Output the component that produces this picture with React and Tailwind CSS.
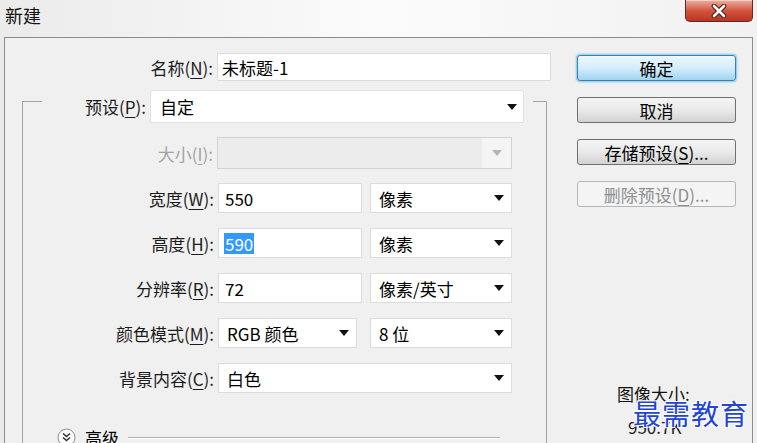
import React from 'react';

const Caret = ({ color = '#111' }) => (
  <svg width="10" height="6" viewBox="0 0 10 6" className="shrink-0">
    <path d="M0 0h10L5 6z" fill={color} />
  </svg>
);

const Label = ({ text, k, className = '' }) => (
  <span className={`shrink-0 text-right text-[17px] leading-none text-[#1c1c1c] ${className}`}>
    {text}(<span className="underline underline-offset-[3px]">{k}</span>):
  </span>
);

const CloseButton = () => (
  <div className="flex h-[22px] w-[68px] items-center justify-center rounded-b-[5px] border border-t-0 border-[#5e2a22] bg-gradient-to-b from-[#eab0a4] via-[#d4563f] to-[#b93320] shadow-[inset_0_1px_0_#f6cfc6]">
    <svg width="16" height="14" viewBox="0 0 16 14">
      <path d="M3 2 L13 12 M13 2 L3 12" stroke="#4a1e17" strokeWidth="4.6" strokeLinecap="round" />
      <path d="M3 2 L13 12 M13 2 L3 12" stroke="#fff" strokeWidth="2.6" strokeLinecap="round" />
    </svg>
  </div>
);

const Button = ({ children, primary, disabled }) => {
  if (primary) {
    return (
      <div className="flex h-[26px] w-[159px] items-center justify-center rounded-[3px] border border-[#3c7fb1] bg-gradient-to-b from-[#eef8fe] via-[#d4edfb] to-[#9fd3f1] text-[17px] leading-none shadow-[0_0_2px_1px_#7cc6ef]">
        {children}
      </div>
    );
  }
  if (disabled) {
    return (
      <div className="flex h-[26px] w-[159px] items-center justify-center rounded-[3px] border border-[#b3b7ba] bg-[#f4f4f4] text-[17px] leading-none text-[#8f8f8f]">
        {children}
      </div>
    );
  }
  return (
    <div className="flex h-[26px] w-[159px] items-center justify-center rounded-[3px] border border-[#707070] bg-gradient-to-b from-[#f4f4f4] via-[#e9e9e9] to-[#d2d2d2] text-[17px] leading-none">
      {children}
    </div>
  );
};

const Field = ({ children, className = '' }) => (
  <div className={`flex h-full items-center border border-[#dcdcdc] bg-white text-[17px] leading-none ${className}`}>
    {children}
  </div>
);

const Select = ({ children, className = '' }) => (
  <div className={`flex h-full items-center justify-between border border-[#dcdcdc] bg-white pl-[8px] pr-[7px] text-[17px] leading-none ${className}`}>
    <span>{children}</span>
    <Caret />
  </div>
);

export default function App() {
  return (
    <div className="relative h-[443px] w-[757px] overflow-hidden bg-gradient-to-r from-[#ebebeb] via-[#fbfbfb] to-[#f1f1f1] font-['Noto_Sans_CJK_SC',sans-serif] text-black">
      {/* title bar */}
      <div className="flex h-[37px] items-start justify-between pr-[4px]">
        <span className="ml-[5px] mt-[3px] text-[18px] leading-[24px] text-[#111]">新建</span>
        <CloseButton />
      </div>

      {/* dialog body */}
      <div className="ml-[4px] flex h-[420px] w-[749px] border border-b-0 border-[#8c8c8c] bg-[#f0f0f0]">
        <div className="flex w-[548px] shrink-0 flex-col pt-[15px]">
          {/* name */}
          <div className="flex h-[28px] items-center">
            <Label text="名称" k="N" className="w-[208px]" />
            <Field className="ml-[4px] w-[334px] pl-[4px]">未标题-1</Field>
          </div>

          {/* preset row over the group edge */}
          <div className="mt-[9px] flex h-[33px] items-center">
            <div className="ml-[17px] mt-[11px] h-[22px] w-[20px] self-start border-l border-t border-[#a3a3a3]" />
            <Label text="预设" k="P" className="w-[104px]" />
            <div className="ml-[4px] flex h-full w-[374px] items-center justify-between rounded-[2px] border border-[#e2e2e2] bg-white pl-[9px] pr-[6px] text-[17px] leading-none">
              <span>自定</span>
              <Caret />
            </div>
            <div className="ml-[9px] mt-[11px] h-[22px] w-[14px] self-start border-r border-t border-[#a3a3a3]" />
          </div>

          {/* group */}
          <div className="ml-[17px] flex w-[525px] flex-1 flex-col border-l border-r border-[#a3a3a3]">
            <div className="mt-[14px] flex h-[32px] items-center">
              <span className="w-[190px] shrink-0 text-right text-[17px] leading-none text-[#a3a3a3]">
                大小(<span className="underline underline-offset-[3px]">I</span>):
              </span>
              <div className="ml-[4px] flex h-full w-[295px] items-stretch border border-[#d2d2d2] bg-[#ececec]">
                <div className="flex-1" />
                <div className="flex w-[29px] items-center justify-center bg-[#f4f4f4]">
                  <Caret color="#b5b5b5" />
                </div>
              </div>
            </div>

            <div className="mt-[14px] flex h-[30px] items-center">
              <Label text="宽度" k="W" className="w-[191px]" />
              <Field className="ml-[4px] w-[144px] pl-[6px]">550</Field>
              <Select className="ml-[8px] w-[142px]">像素</Select>
            </div>

            <div className="mt-[15px] flex h-[30px] items-center">
              <Label text="高度" k="H" className="w-[191px]" />
              <Field className="ml-[4px] w-[144px] pl-[5px]">
                <span className="bg-[#3399ff] px-[1px] py-[2px] text-white">590</span>
              </Field>
              <Select className="ml-[8px] w-[142px]">像素</Select>
            </div>

            <div className="mt-[15px] flex h-[30px] items-center">
              <Label text="分辨率" k="R" className="w-[191px]" />
              <Field className="ml-[4px] w-[144px] pl-[6px]">72</Field>
              <Select className="ml-[8px] w-[142px]">像素/英寸</Select>
            </div>

            <div className="mt-[15px] flex h-[30px] items-center">
              <Label text="颜色模式" k="M" className="w-[191px]" />
              <Select className="ml-[4px] w-[139px]">RGB 颜色</Select>
              <Select className="ml-[13px] w-[142px]">8 位</Select>
            </div>

            <div className="mt-[15px] flex h-[30px] items-center">
              <Label text="背景内容" k="C" className="w-[191px]" />
              <Select className="ml-[4px] w-[294px]">白色</Select>
            </div>

            <div className="mt-[35px] flex h-[18px] items-center">
              <svg width="19" height="19" viewBox="0 0 19 19" className="ml-[34px] shrink-0">
                <circle cx="9.5" cy="9.5" r="8.5" fill="#fbfbfb" stroke="#8a8a8a" />
                <path d="M6 5.5 L9.5 8.5 L13 5.5 M6 9.5 L9.5 12.5 L13 9.5" fill="none" stroke="#333" strokeWidth="1.6" />
              </svg>
              <span className="ml-[9px] text-[17px] leading-none">高级</span>
              <div className="ml-[9px] mr-[46px] flex-1 border-t border-[#b0b0b0] shadow-[0_1px_0_#fff]" />
            </div>
          </div>
        </div>

        {/* buttons column */}
        <div className="flex flex-1 flex-col pl-[24px] pt-[17px]">
          <Button primary>确定</Button>
          <div className="mt-[16px]">
            <Button>取消</Button>
          </div>
          <div className="mt-[16px]">
            <Button>
              存储预设(<span className="underline underline-offset-[3px]">S</span>)...
            </Button>
          </div>
          <div className="mt-[16px]">
            <Button disabled>
              删除预设(<span className="underline underline-offset-[3px]">D</span>)...
            </Button>
          </div>
          <span className="ml-[40px] mt-[177px] text-[17px] leading-[20px] text-[#111]">图像大小:</span>
          <span className="ml-[51px] mt-[13px] text-[17px] leading-[20px] text-[#222]">950.7K</span>
        </div>
      </div>

      {/* watermark */}
      <div className="absolute left-[633px] top-[395px] text-[28px] leading-[36px] tracking-[1px] text-[#2244d8] [text-shadow:-1px_-1px_0_#fff,1px_-1px_0_#fff,-1px_1px_0_#fff,1px_1px_0_#fff]">
        最需教育
      </div>
    </div>
  );
}
